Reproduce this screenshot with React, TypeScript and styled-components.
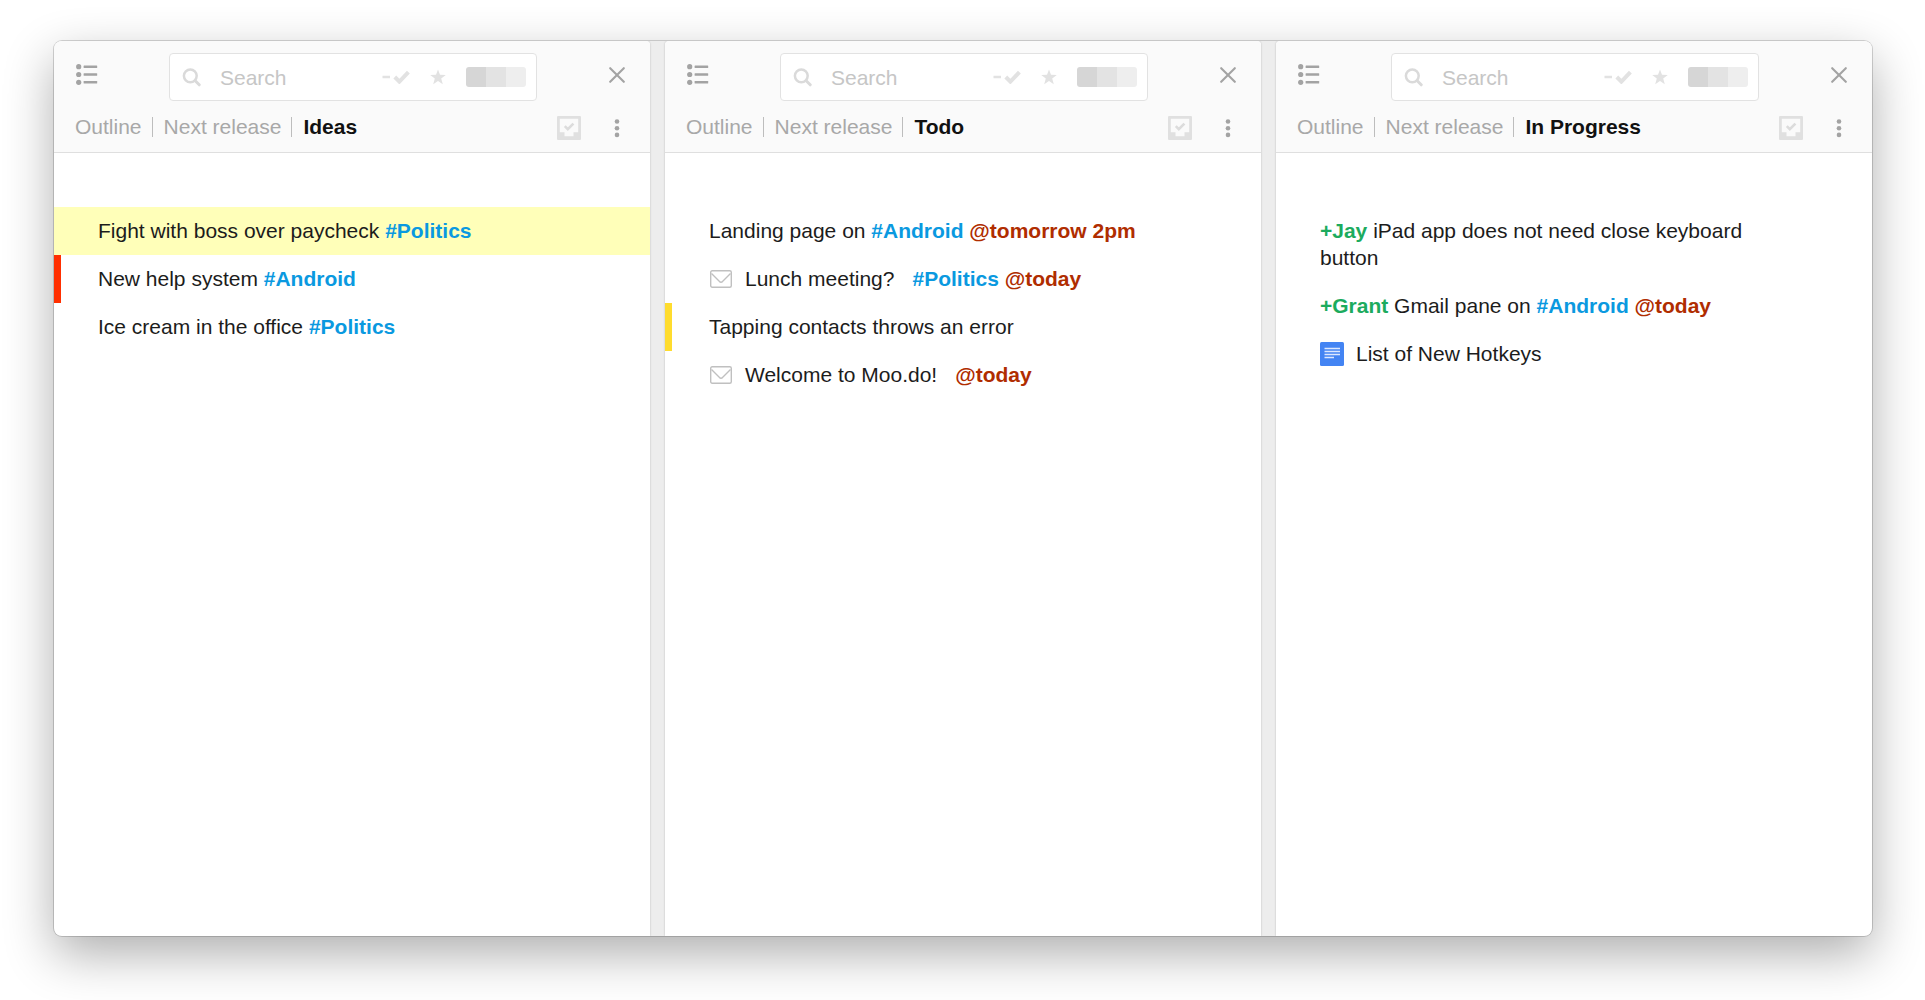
import React, { useId } from "react";
import styled, { createGlobalStyle } from "styled-components";

const GlobalStyle = createGlobalStyle`
  *, *::before, *::after { box-sizing: border-box; }
  body {
    margin: 0;
    background: #fff;
    color: #1c1c1c;
    font-family: "Liberation Sans", Arial, sans-serif;
    font-size: 21px;
    line-height: 27px;
  }
`;

const Desktop = styled.div`
  display: flex;
  min-height: 100vh;
  padding: 41px 53px 64px 54px;
`;

const Window = styled.main`
  flex: 1;
  display: flex;
  gap: 15px;
  overflow: hidden;
  border-radius: 8px;
  background: #ededed;
  box-shadow: 0 0 0 1px rgba(0, 0, 0, 0.16), 0 18px 50px rgba(0, 0, 0, 0.32);
`;

const PaneBox = styled.section`
  flex: 1 1 0;
  min-width: 0;
  overflow: hidden;
  border-radius: 4px 4px 0 0;
  background: #fff;
  box-shadow: 0 0 2px rgba(0, 0, 0, 0.25);
`;

const Header = styled.header`
  padding: 12px 19px 0;
  background: #fafafa;
  border-bottom: 1px solid #dfdfdf;
`;

const TopRow = styled.div`
  display: flex;
  align-items: flex-start;
`;

const IconButton = styled.button<{ $height: number }>`
  display: flex;
  align-items: center;
  justify-content: center;
  flex: none;
  width: 28px;
  height: ${(p) => p.$height}px;
  padding: 0;
  border: 0;
  background: none;
  color: #a3a3a3;
  cursor: pointer;
`;

const SearchBox = styled.div`
  flex: 1;
  min-width: 0;
  display: flex;
  align-items: center;
  height: 48px;
  margin: 0 66px 0 68px;
  padding: 0 10px 0 12px;
  background: #fff;
  border: 1px solid #e2e2e2;
  border-radius: 4px;
`;

const SearchLabel = styled.label`
  display: flex;
  flex: none;
  margin-right: 19px;
  color: #dadada;
`;

const SearchInput = styled.input`
  flex: 1;
  min-width: 0;
  padding: 0;
  border: 0;
  outline: 0;
  background: none;
  font: inherit;
  color: inherit;
  &::placeholder {
    color: #c6c6c6;
    opacity: 1;
  }
`;

const FilterButton = styled.button`
  display: flex;
  flex: none;
  margin-right: 20px;
  padding: 0;
  border: 0;
  background: none;
  color: #e2e2e2;
  cursor: pointer;
`;

const Swatches = styled.div`
  display: flex;
  flex: none;
  overflow: hidden;
  border-radius: 3px;
`;

const Swatch = styled.button<{ $color: string }>`
  width: 20px;
  height: 20px;
  padding: 0;
  border: 0;
  background: ${(p) => p.$color};
  cursor: pointer;
`;

const PathRow = styled.div`
  display: flex;
  align-items: center;
  justify-content: space-between;
  height: 51px;
`;

const Crumbs = styled.nav`
  display: flex;
  align-items: center;
  padding-left: 2px;
  white-space: nowrap;
`;

const Crumb = styled.a`
  color: #a8a8a8;
  text-decoration: none;
`;

const Separator = styled.span`
  width: 1px;
  height: 20px;
  margin: 0 11px 0 10px;
  background: #bdbdbd;
`;

const CurrentCrumb = styled.h1`
  margin: 0;
  font: inherit;
  font-weight: 700;
  color: #111;
`;

const Actions = styled.div`
  display: flex;
  gap: 20px;
  padding-top: 2px;
`;

const Items = styled.ul`
  margin: 0;
  padding: 54px 0 0;
  list-style: none;
`;

const Item = styled.li<{ $flag?: string; $highlight?: boolean }>`
  display: flex;
  gap: 12px;
  padding: 10px 80px 11px 37px;
  border-left: 7px solid ${(p) => p.$flag ?? "transparent"};
  background: ${(p) => (p.$highlight ? "#ffffb9" : "transparent")};
`;

const ItemIcon = styled.span`
  display: flex;
  align-items: center;
  justify-content: center;
  flex: none;
  width: 24px;
  height: 27px;
`;

const ItemText = styled.span`
  min-width: 0;
`;

const tokenColors = { tag: "#0a99e0", date: "#b02d00", person: "#1cab5e" };

const Token = styled.b<{ $kind: keyof typeof tokenColors }>`
  font-weight: 700;
  color: ${(p) => tokenColors[p.$kind]};
`;

const Labels = styled.span`
  margin-left: 18px;
`;

const ListIcon = () => (
  <svg width="22" height="22" viewBox="0 0 22 22" fill="currentColor" aria-hidden="true">
    {[2.7, 10.5, 18.3].map((y) => (
      <React.Fragment key={y}>
        <circle cx="2.7" cy={y} r="2.6" />
        <rect x="7.6" y={y - 1.3} width="13.600" height="2.6" rx="0.6" />
      </React.Fragment>
    ))}
  </svg>
);

const CloseIcon = () => (
  <svg width="16" height="16" viewBox="0 0 16 16" fill="none" stroke="currentColor" strokeWidth="2.1" strokeLinecap="round" aria-hidden="true">
    <path d="M1.2 1.2 14.8 14.8M14.8 1.2 1.2 14.8" />
  </svg>
);

const SearchIcon = () => (
  <svg width="19" height="19" viewBox="0 0 19 19" fill="none" stroke="currentColor" aria-hidden="true">
    <circle cx="8.300" cy="7.800" r="6.4" strokeWidth="2.5" />
    <path d="m13.2 12.800 4 4" strokeWidth="3" strokeLinecap="round" />
  </svg>
);

const DoneFilterIcon = () => (
  <svg width="28" height="14" viewBox="0 0 28 14" fill="none" stroke="currentColor" aria-hidden="true">
    <path d="M0.5 7h7.5" strokeWidth="2.4" />
    <path d="m12.8 7 4.6 4.6 9-9.4" strokeWidth="4" />
  </svg>
);

const StarIcon = () => (
  <svg width="16" height="16" viewBox="0 0 16 16" fill="currentColor" aria-hidden="true">
    <path d="m8 .4 2 5.4 5.8.2-4.600 3.600 1.600 5.600L8 12l-4.800 3.200 1.600-5.600L.2 6l5.800-.2z" />
  </svg>
);

const InboxIcon = () => (
  <svg width="24" height="24" viewBox="0 0 24 24" aria-hidden="true">
    <path
      fill="#e0e0e0"
      fillRule="evenodd"
      d="M1 0h22a1 1 0 0 1 1 1v22a1 1 0 0 1-1 1H1a1 1 0 0 1-1-1V1a1 1 0 0 1 1-1zM2.800 2.800v13.400h4.700v4h9v-4h4.700V2.800z"
    />
    <path d="m7.800 10.200 3 3 5.600-5.600" fill="none" stroke="#dcdcdc" strokeWidth="2.600" />
  </svg>
);

const MoreIcon = () => (
  <svg width="6" height="20" viewBox="0 0 6 20" fill="currentColor" aria-hidden="true">
    <circle cx="3" cy="3.500" r="2.300" />
    <circle cx="3" cy="10.200" r="2.300" />
    <circle cx="3" cy="16.900" r="2.300" />
  </svg>
);

const MailIcon = () => (
  <svg width="22" height="18" viewBox="0 0 22 18" fill="none" stroke="#c0c0c0" strokeWidth="1.400" aria-hidden="true">
    <rect x="0.700" y="0.700" width="20.600" height="16.600" rx="1.500" />
    <path d="m1.500 3.600 8 8q1.500 1.200 3 0l8-8" />
  </svg>
);

const DocIcon = () => (
  <svg width="24" height="24" viewBox="0 0 24 24" aria-hidden="true">
    <rect width="24" height="24" rx="1.500" fill="#4384f3" />
    <path d="M4.500 6.500h15.500M4.500 9.500h15.500M4.500 12.500h15.500M4.500 15.500h9.500" stroke="#dce8ff" strokeWidth="1.700" />
  </svg>
);

type Kind = keyof typeof tokenColors;
const tag = (text: string, kind: Kind = "tag") => <Token $kind={kind}>{text}</Token>;

interface Entry {
  body: React.ReactNode;
  icon?: React.ReactNode;
  flag?: string;
  highlight?: boolean;
}

const panes: { title: string; entries: Entry[] }[] = [
  {
    title: "Ideas",
    entries: [
      { body: <>Fight with boss over paycheck {tag("#Politics")}</>, highlight: true },
      { body: <>New help system {tag("#Android")}</>, flag: "#ff2f00" },
      { body: <>Ice cream in the office {tag("#Politics")}</> },
    ],
  },
  {
    title: "Todo",
    entries: [
      { body: <>Landing page on {tag("#Android")} {tag("@tomorrow 2pm", "date")}</> },
      {
        body: <>Lunch meeting?<Labels>{tag("#Politics")} {tag("@today", "date")}</Labels></>,
        icon: <MailIcon />,
      },
      { body: "Tapping contacts throws an error", flag: "#ffdc2e" },
      { body: <>Welcome to Moo.do!<Labels>{tag("@today", "date")}</Labels></>, icon: <MailIcon /> },
    ],
  },
  {
    title: "In Progress",
    entries: [
      { body: <>{tag("+Jay", "person")} iPad app does not need close keyboard button</> },
      { body: <>{tag("+Grant", "person")} Gmail pane on {tag("#Android")} {tag("@today", "date")}</> },
      { body: "List of New Hotkeys", icon: <DocIcon /> },
    ],
  },
];

function Pane({ title, entries }: { title: string; entries: Entry[] }) {
  const searchId = useId();
  return (
    <PaneBox>
      <Header>
        <TopRow>
          <IconButton type="button" $height={43} aria-label="Navigation"><ListIcon /></IconButton>
          <SearchBox>
            <SearchLabel htmlFor={searchId} aria-label="Search"><SearchIcon /></SearchLabel>
            <SearchInput id={searchId} type="text" placeholder="Search" />
            <FilterButton type="button" aria-label="Hide completed"><DoneFilterIcon /></FilterButton>
            <FilterButton type="button" aria-label="Starred"><StarIcon /></FilterButton>
            <Swatches>
              <Swatch type="button" $color="#d6d6d6" aria-label="High priority" />
              <Swatch type="button" $color="#e3e3e3" aria-label="Medium priority" />
              <Swatch type="button" $color="#eeeeee" aria-label="Low priority" />
            </Swatches>
          </SearchBox>
          <IconButton type="button" $height={43} aria-label="Close pane"><CloseIcon /></IconButton>
        </TopRow>
        <PathRow>
          <Crumbs aria-label="Path">
            <Crumb href="#outline">Outline</Crumb>
            <Separator />
            <Crumb href="#next-release">Next release</Crumb>
            <Separator />
            <CurrentCrumb>{title}</CurrentCrumb>
          </Crumbs>
          <Actions>
            <IconButton type="button" $height={24} aria-label="Completed items"><InboxIcon /></IconButton>
            <IconButton type="button" $height={24} aria-label="More options"><MoreIcon /></IconButton>
          </Actions>
        </PathRow>
      </Header>
      <Items>
        {entries.map((entry, i) => (
          <Item key={i} $flag={entry.flag} $highlight={entry.highlight}>
            {entry.icon && <ItemIcon>{entry.icon}</ItemIcon>}
            <ItemText>{entry.body}</ItemText>
          </Item>
        ))}
      </Items>
    </PaneBox>
  );
}

export default function App() {
  return (
    <>
      <GlobalStyle />
      <Desktop>
        <Window>
          {panes.map((pane) => (
            <Pane key={pane.title} {...pane} />
          ))}
        </Window>
      </Desktop>
    </>
  );
}
